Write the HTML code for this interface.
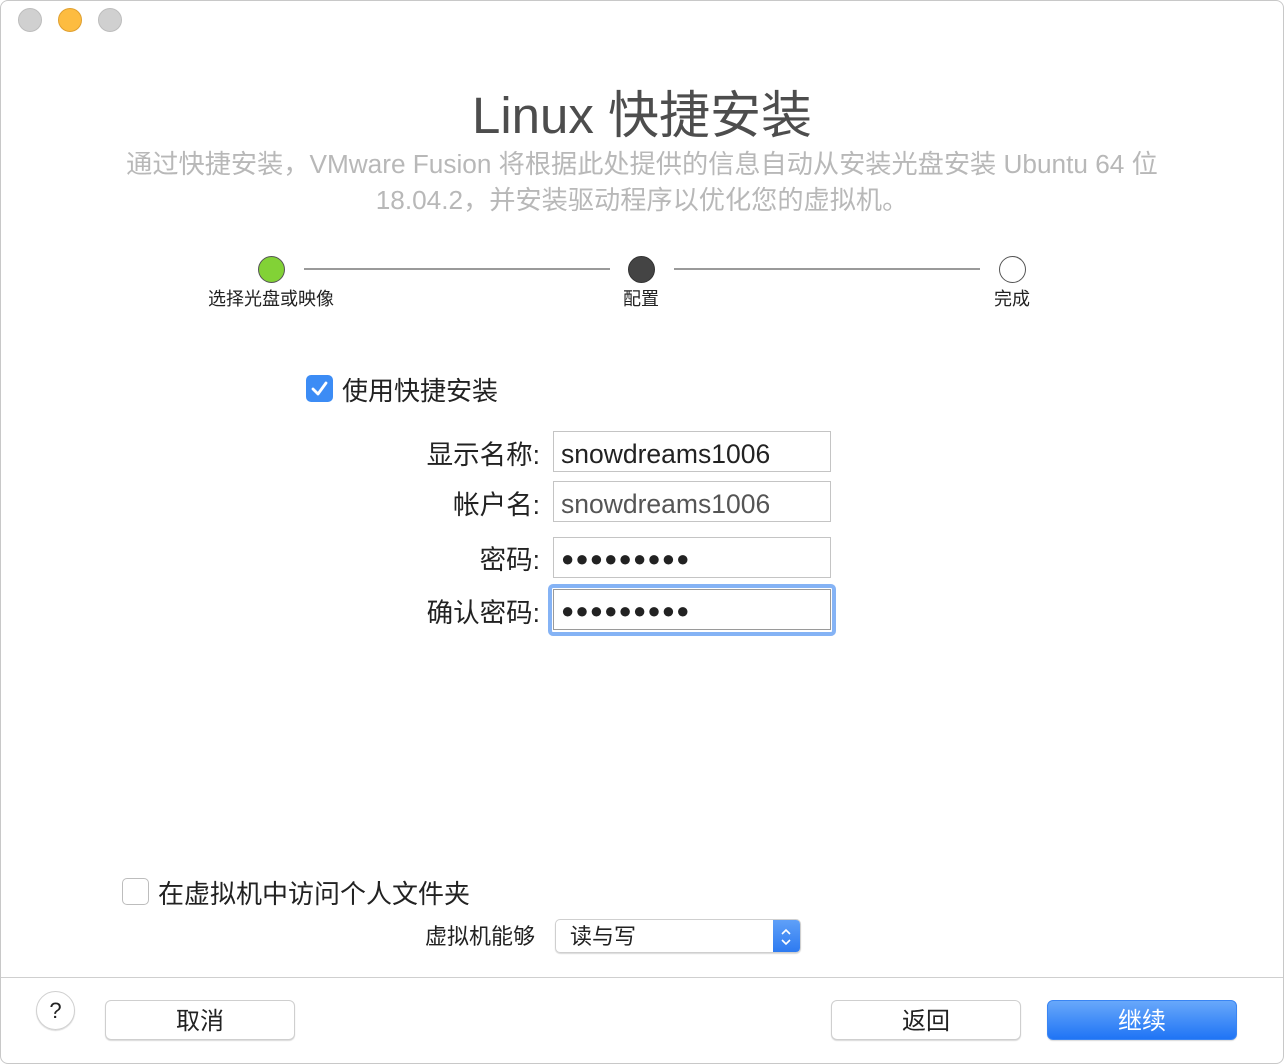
<!DOCTYPE html>
<html><head><meta charset="utf-8"><style>
*{margin:0;padding:0;box-sizing:border-box}
body{width:1284px;height:1064px;background:#fff;position:relative;overflow:hidden;font-family:"Liberation Sans","Noto Sans CJK SC",sans-serif;color:#222}
.a{position:absolute}
.win{left:0;top:0;width:1284px;height:1064px;border:1px solid #c8c8c8;border-radius:8px}
.tl{width:24px;height:24px;border-radius:50%;top:8px;background:#d0d0d0;border:1px solid #bdbdbd}
.c{text-align:center}
.lab{right:744px;font-size:26.5px;text-align:right;white-space:nowrap;line-height:40px}
.fld{left:553px;width:278px;height:41px;border:1px solid #c4c4c4;font-size:26.5px;line-height:45px;padding-left:7px;white-space:nowrap}
.dots{font-size:22px;letter-spacing:1.1px;line-height:41px}
.btn{height:40px;border:1px solid #cfcfcf;border-radius:6px;background:#fff;box-shadow:0 1px 1px rgba(0,0,0,.15);font-size:24px;text-align:center;line-height:42px}
</style></head><body>
<div class="a win"></div>
<div class="a tl" style="left:18px"></div>
<div class="a tl" style="left:58px;background:#fdbc40;border-color:#e0a030"></div>
<div class="a tl" style="left:98px"></div>
<div class="a c" style="left:0;width:1284px;top:84px;font-size:51px;color:#4d4d4d;line-height:64px">Linux 快捷安装</div>
<div class="a c" style="left:0;width:1284px;top:146px;font-size:26.2px;color:#b8b8b8;line-height:36px">通过快捷安装，VMware Fusion 将根据此处提供的信息自动从安装光盘安装 Ubuntu 64 位<br>18.04.2，并安装驱动程序以优化您的虚拟机。</div>
<div class="a" style="left:304px;top:268px;width:306px;height:2px;background:#9a9a9a"></div>
<div class="a" style="left:674px;top:268px;width:306px;height:2px;background:#9a9a9a"></div>
<div class="a" style="left:258px;top:256px;width:27px;height:27px;border-radius:50%;background:#82d236;border:1px solid #555"></div>
<div class="a" style="left:628px;top:256px;width:27px;height:27px;border-radius:50%;background:#444;border:1px solid #333"></div>
<div class="a" style="left:999px;top:256px;width:27px;height:27px;border-radius:50%;background:#fff;border:1px solid #555"></div>
<div class="a c" style="left:171px;width:200px;top:288px;font-size:18px;line-height:22px">选择光盘或映像</div>
<div class="a c" style="left:541px;width:200px;top:288px;font-size:18px;line-height:22px">配置</div>
<div class="a c" style="left:912px;width:200px;top:288px;font-size:18px;line-height:22px">完成</div>
<div class="a" style="left:306px;top:375px;width:27px;height:27px;border-radius:5px;background:#3c8cf5"><svg width="27" height="27"><path d="M7 14l5 5 8-11" stroke="#fff" stroke-width="2.8" fill="none" stroke-linecap="round" stroke-linejoin="round"/></svg></div>
<div class="a" style="left:342px;top:374px;font-size:26px;line-height:34px">使用快捷安装</div>
<div class="a lab" style="top:435px">显示名称:</div>
<div class="a lab" style="top:485px">帐户名:</div>
<div class="a lab" style="top:540px">密码:</div>
<div class="a lab" style="top:593px">确认密码:</div>
<div class="a fld" style="top:431px">snowdreams1006</div>
<div class="a fld" style="top:481px;color:#555">snowdreams1006</div>
<div class="a fld dots" style="top:537px">●●●●●●●●●</div>
<div class="a" style="left:548px;top:584px;width:288px;height:52px;border:4px solid #85b3f5;border-radius:5px"></div>
<div class="a fld dots" style="top:589px;border-color:#9a9a9a">●●●●●●●●●</div>
<div class="a" style="left:122px;top:878px;width:27px;height:27px;border:1px solid #bdbdbd;border-radius:5px;background:#fff"></div>
<div class="a" style="left:158px;top:877px;font-size:26px;line-height:34px">在虚拟机中访问个人文件夹</div>
<div class="a" style="left:425px;top:922px;font-size:22px;line-height:30px">虚拟机能够</div>
<div class="a" style="left:555px;top:919px;width:246px;height:34px;border:1px solid #cfcfcf;border-radius:5px;box-shadow:0 1px 1px rgba(0,0,0,.15);font-size:22px;line-height:34px;padding-left:14px;overflow:hidden">读与写
<div class="a" style="right:0;top:0;width:27px;height:34px;background:linear-gradient(#5fa0f8,#2a78f0)"><svg width="27" height="34"><path d="M9 14l4-4 4 4M9 20l4 4 4-4" stroke="#fff" stroke-width="1.6" fill="none"/></svg></div></div>
<div class="a" style="left:1px;top:977px;width:1282px;height:1px;background:#cfcfcf"></div>
<div class="a" style="left:36px;top:991px;width:39px;height:39px;border-radius:50%;border:1px solid #cfcfcf;box-shadow:0 1px 1px rgba(0,0,0,.15);text-align:center;font-size:22px;line-height:37px">?</div>
<div class="a btn" style="left:105px;top:1000px;width:190px">取消</div>
<div class="a btn" style="left:831px;top:1000px;width:190px">返回</div>
<div class="a btn" style="left:1047px;top:1000px;width:190px;background:linear-gradient(#68a8fa,#1f74f5);border-color:#3a85f3;color:#fff">继续</div>
</body></html>
